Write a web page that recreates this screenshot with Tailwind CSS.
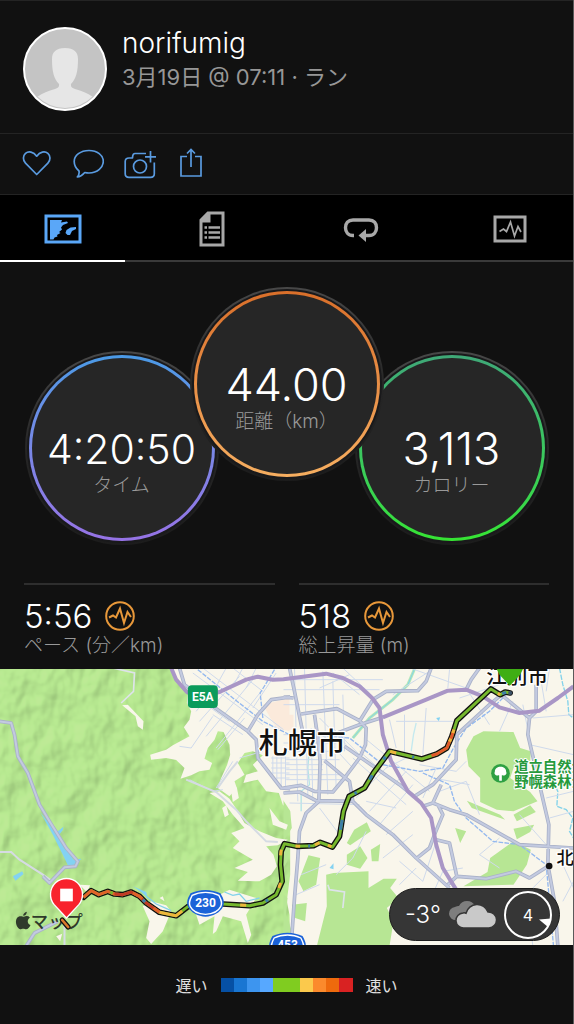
<!DOCTYPE html>
<html lang="ja">
<head>
    <meta charset="UTF-8">
    <meta name="viewport" content="width=device-width, initial-scale=1.0">
    <title>norifumig - ラン</title>
    <script src="https://cdn.jsdelivr.net/npm/@tailwindcss/browser@4"></script>
</head>
<body class="bg-[#111111] min-h-screen border-r border-[#5a5a5a] font-['Inter','Noto_Sans_CJK_JP',sans-serif] text-white">
    <!-- Profile -->
    <header class="border-t border-[#242424] flex items-start gap-[15px] px-[23px] pt-[26px] pb-[22px]">
        <svg class="size-[84px] shrink-0" viewBox="0 0 84 84" role="img" aria-label="norifumig">
            <clipPath id="avatarClip"><circle cx="42" cy="42" r="39"/></clipPath>
            <circle cx="42" cy="42" r="41" fill="#c4c4c4"/>
            <g clip-path="url(#avatarClip)" fill="#e6e6e6">
                <path d="M42 21c-9 0-13 4-13 11 0 13 2 20 7 25 .5 3-1 4-4 5-7 2-12 4-18 8v14h56V70c-6-4-11-6-18-8-3-1-4.500-2-4-5 5-5 7-12 7-25 0-7-4-11-13-11z"/>
            </g>
            <circle cx="42" cy="42" r="41" fill="none" stroke="#ffffff" stroke-width="2"/>
        </svg>
        <div>
            <h1 class="text-[28px] leading-8 font-light">norifumig</h1>
            <p class="text-[22px] leading-8 mt-[2px] text-[#979797] font-['Inter','Noto_Sans_CJK_JP',sans-serif]">3月19日 @ 07:11 · ラン</p>
        </div>
    </header>

    <!-- Actions -->
    <div class="border-t border-[#242424] h-[61px] flex items-center gap-5 px-[22px] pb-[2px] text-[#5a9be0]">
        <button type="button" aria-label="いいね">
            <svg width="30" height="32" viewBox="0 0 30 32" fill="none" stroke="currentColor" stroke-width="1.700" stroke-linejoin="round"><path d="M14.700 27.500 3.500 16.200C.6 13.200.9 8.700 3.500 6.400c3-2.600 8-1.800 11.200 2.800 3.200-4.600 8.200-5.400 11.200-2.800 2.600 2.300 2.900 6.800 0 9.800z"/></svg>
        </button>
        <button type="button" aria-label="コメント">
            <svg width="32" height="32" viewBox="0 0 32 32" fill="none" stroke="currentColor" stroke-width="1.700" stroke-linejoin="round"><path d="M17 3.500c8.200 0 14.300 4.600 14.300 10.700S25.500 25.800 17 26c-1.700 0-3-.2-4.200-.5-2 2.300-4.800 4.300-7.500 4.500 1.500-1.700 2.200-3.500 1.700-6C4 21.500 2.200 18.500 2.200 14.500 2.200 8.300 8.500 3.500 17 3.500z"/></svg>
        </button>
        <button type="button" aria-label="写真を追加">
            <svg width="32" height="32" viewBox="0 0 32 32" fill="none" stroke="currentColor" stroke-width="1.700" stroke-linejoin="round"><path d="M22 6.500H11c-1.500 0-2 .8-2.300 2.300L8.500 11H5c-2.500 0-3.800 1.200-3.800 3.500v12.300c0 2.400 1.300 3.600 3.800 3.600h21.500c2.500 0 3.800-1.200 3.800-3.600V15.500"/><circle cx="16" cy="19.500" r="6.500"/><path d="M26.500 4v11.500M21 9.800h11"/></svg>
        </button>
        <button type="button" aria-label="共有" class="ml-[3px]">
            <svg width="24" height="32" viewBox="0 0 24 32" fill="none" stroke="currentColor" stroke-width="1.700"><path d="M8 9.500H2v19.500h20V9.500h-6M12 20V2.500M8 6.500l4-4 4 4"/></svg>
        </button>
    </div>

    <!-- Tabs -->
    <nav class="bg-black border-t border-[#242424] flex justify-between h-[68px] shadow-[inset_0_-2px_0_#3a3a3a]">
        <button type="button" aria-label="マップ" class="w-[125px] flex items-center justify-center border-b-2 border-white pt-[2px] text-[#5aa7f8]">
            <svg width="38" height="30" viewBox="0 0 38 30"><path d="M2 2h34v26H2z" fill="none" stroke="currentColor" stroke-width="3"/><path d="M6 6h12l-1 2.500 6-1 1 1.500-5 2-2 2.500 1 2-3 2.500 1.500 1-3.500 2 .5 1.500-3 1-1 2H6zM32 13v2l-4 2-2 4h-2.500l-2-2 1-3 4-2.500z" fill="currentColor"/></svg>
        </button>
        <button type="button" aria-label="詳細" class="w-[125px] flex items-center justify-center text-[#a8a8a8]">
            <svg width="26" height="36" viewBox="0 0 26 36"><path d="M9 2h15v32H2V9z" fill="none" stroke="currentColor" stroke-width="3"/><path d="M1.500 8.500 9 1h2.500v10.500h-10z" fill="currentColor"/><path d="M5.500 16.500H8m1.500 0h11.500M5.500 21.500H8m1.500 0h11.500M5.500 26.500H8m1.500 0h11.500" stroke="currentColor" stroke-width="2.600"/></svg>
        </button>
        <button type="button" aria-label="ラップ" class="w-[125px] flex items-center justify-center pt-[2px] text-[#a8a8a8]">
            <svg width="36" height="26" viewBox="0 0 36 26"><path d="M11 18.500h-1C5 18.500 2.500 15 2.500 10.700S5 3 10 3h16c5 0 7.500 3.400 7.500 7.700S31 18.500 26 18.500h-5" fill="none" stroke="currentColor" stroke-width="3.400"/><path d="M23 12v13l-7.500-6.500z" fill="currentColor"/></svg>
        </button>
        <button type="button" aria-label="グラフ" class="w-[125px] flex items-center justify-center text-[#a8a8a8]">
            <svg width="34" height="28" viewBox="0 0 34 28"><path d="M2 2h30v24H2z" fill="none" stroke="currentColor" stroke-width="3"/><path d="m6.500 16.500 4-2.500 3 2.500 4-9.500 4 14 3.500-9.500L28 17" fill="none" stroke="currentColor" stroke-width="1.700"/></svg>
        </button>
    </nav>

    <main>
        <!-- Circle gauges -->
        <section class="flex justify-center -space-x-[29px] pt-[25px]">
            <div class="mt-16 size-[194px] shrink-0 rounded-full bg-linear-to-b from-[#484848] via-[#262626] to-[#1c1c1c] p-[2px]">
                <div class="size-full rounded-full bg-[#19191b] p-[2px]">
                    <div class="size-full rounded-full bg-linear-to-b from-[#4a9ae6] to-[#9673e6] p-[3px]">
                        <div class="size-full rounded-full bg-[#262626] flex flex-col items-center pt-[66px]">
                            <span class="text-[41px] leading-[50px] font-light">4:20:50</span>
                            <span class="text-[19px] leading-6 font-light text-[#999999]">タイム</span>
                        </div>
                    </div>
                </div>
            </div>
            <div class="relative z-10 size-[194px] shrink-0 rounded-full bg-linear-to-b from-[#484848] via-[#262626] to-[#1c1c1c] p-[2px]">
                <div class="size-full rounded-full bg-[#19191b] p-[2px]">
                    <div class="size-full rounded-full bg-linear-to-b from-[#d96f2a] to-[#f6ae60] p-[3px]">
                        <div class="size-full rounded-full bg-[#262626] flex flex-col items-center pt-[66px]">
                            <span class="text-[45px] leading-[50px] font-light">44.00</span>
                            <span class="text-[19px] leading-6 font-light text-[#999999]">距離（km）</span>
                        </div>
                    </div>
                </div>
            </div>
            <div class="mt-16 size-[194px] shrink-0 rounded-full bg-linear-to-b from-[#484848] via-[#262626] to-[#1c1c1c] p-[2px]">
                <div class="size-full rounded-full bg-[#19191b] p-[2px]">
                    <div class="size-full rounded-full bg-linear-to-b from-[#3fa877] to-[#36e432] p-[3px]">
                        <div class="size-full rounded-full bg-[#262626] flex flex-col items-center pt-[66px]">
                            <span class="text-[45px] leading-[50px] font-light">3,113</span>
                            <span class="text-[19px] leading-6 font-light text-[#999999]">カロリー</span>
                        </div>
                    </div>
                </div>
            </div>
        </section>

        <!-- Stats -->
        <section class="grid grid-cols-2 gap-6 px-6 pt-[38px] pb-3">
            <div class="border-t-2 border-[#2e2e2e] pt-3">
                <div class="flex items-center gap-[13px]">
                    <span class="text-[33px] leading-[38px] font-light">5:56</span>
                    <svg width="30" height="30" viewBox="0 0 30 30" fill="none" stroke="#e8983a" stroke-width="2"><circle cx="15" cy="15" r="13.800"/><path d="m4 16.500 4-2 3 2 4-9 4 14.500 3.500-11L26 16"/></svg>
                </div>
                <div class="text-[19px] leading-[22px] font-light text-[#999999]">ペース (分／km)</div>
            </div>
            <div class="border-t-2 border-[#2e2e2e] pt-3">
                <div class="flex items-center gap-[13px]">
                    <span class="text-[33px] leading-[38px] font-light">518</span>
                    <svg width="30" height="30" viewBox="0 0 30 30" fill="none" stroke="#e8983a" stroke-width="2"><circle cx="15" cy="15" r="13.800"/><path d="m4 16.500 4-2 3 2 4-9 4 14.500 3.500-11L26 16"/></svg>
                </div>
                <div class="text-[19px] leading-[22px] font-light text-[#999999]">総上昇量 (m)</div>
            </div>
        </section>

        <!-- Map -->
        <section class="relative">
            <svg class="block w-full h-[276px]" viewBox="0 3 1722 828" preserveAspectRatio="xMidYMid slice" role="img" aria-label="ルートマップ">
                <defs>
                    <filter id="relief" x="0" y="0" width="100%" height="100%" color-interpolation-filters="sRGB">
                        <feTurbulence type="fractalNoise" baseFrequency="0.013 0.010" numOctaves="3" seed="8" result="noise"/>
                        <feDiffuseLighting in="noise" surfaceScale="15" diffuseConstant="1.200" lighting-color="#b7e692" result="light"><feDistantLight azimuth="225" elevation="62"/></feDiffuseLighting>
                        <feComponentTransfer in="light" result="soft"><feFuncR type="linear" slope="0.350" intercept="0.445"/><feFuncG type="linear" slope="0.350" intercept="0.570"/><feFuncB type="linear" slope="0.350" intercept="0.350"/></feComponentTransfer>
                        <feComposite in="soft" in2="SourceGraphic" operator="in"/>
                    </filter>
                    <path id="route" d="M252 688 275 668 298 680 325 670 345 678 370 680 395 672 420 685 440 705 480 733 530 743 565 716 620 708 670 708 750 713 790 705 830 680 848 640 843 590 845 550 855 527 892 535 942 533 962 523 999 537 1020 505 1032 430 1049 385 1095 360 1122 315 1170 250 1267 273 1312 258 1342 240 1357 205 1372 158 1474 63 1502 80 1517 72 1532 75"/>
                    <path id="mainRoads" d="M0 160 35 165 45 200 55 265 85 315 120 410 150 460 200 540 235 580 228 595 195 598 150 645 130 625M80 834 105 795 175 760M540 0 555 50 640 115 745 190 770 215 775 270 845 360 872 362M745 190 775 140 815 95 872 87M870 0 885 70 905 170 912 200M852 87 882 90M905 138 1012 122 1080 158 1100 180 1098 230 1080 270 1035 330 1000 372 945 370 905 352 852 360M945 140 955 210 962 280 958 400 920 435 900 490 895 570 885 690 880 760 875 834M852 375 900 372 950 398 1060 400M1295 0 1280 40 1255 68 1160 70 1120 95 1080 160M1000 200 1080 170 1150 148M975 278 1050 340 1060 400 1100 440 1180 500 1250 570 1350 660M1035 235 1100 280 1200 350 1245 385 1300 350 1370 275 1372 200 1470 110 1500 85M1440 0 1415 35 1400 65M1505 80 1590 150 1585 200 1620 350 1648 470 1645 590 1665 700 1675 834M1590 150 1610 130V50M1270 415 1300 405 1325 350M1315 410 1330 440 1305 500 1290 540 1250 572M1300 405 1350 425 1400 440 1560 530 1722 540M1310 515 1350 525 1372 625 1460 632 1550 610 1590 630 1645 595M1345 650 1372 625"/>
                </defs>
                <rect width="1722" height="834" fill="#f9f6eb"/>
                <path d="M790 110 870 90 870 190 830 180zM852 140h30v45h-30z" fill="#fbeadb"/>

                <!-- forest -->
                <path filter="url(#relief)" fill="#b2e38b" d="M0 0H515L535 40 565 75 562 105 575 130 570 155 553 178 570 205 520 232 500 245 452 260 455 275 500 270 530 276 555 300 543 332 575 322 600 310 630 305 638 285 615 272 625 240 645 215 655 190 672 192 690 230 692 260 683 290 665 330 655 360 690 385 712 360 705 340 735 320 715 285 735 255 760 250 790 262 760 290 775 310 740 320 732 345 775 335 800 370 838 375 850 410 872 430 872 520 872 620 862 700 870 740 872 834H0z"/>
                <g transform="translate(852 0)" fill="#b7e694">
                    <path d="M0 385 20 430 25 480 0 520 18 540 12 580 0 600zM0 680 12 690 8 740 25 790 0 834zM45 640 75 562 110 570 98 650 60 670zM25 710 70 705 65 760 35 750zM150 615 255 610 255 660 300 632 340 632 320 660 345 690 310 720 330 760 318 834H100L130 715 128 620zM190 525 212 485 250 463 262 490 200 532zM190 560 230 535 252 570 230 602 190 590zM265 580 262 545 290 528 285 580zM548 245 570 205 600 190 690 192 710 240 742 250 740 280 690 300 680 330 740 372 762 400 690 430 640 425 590 402 590 330 555 295zM620 570 690 520 742 545 730 590 690 650 540 655 612 612zM690 440 740 412 757 432 700 460zM690 482 752 470 740 492 700 514zM515 480 548 490 530 525zM550 398 650 440 665 455 565 420z"/>
                </g>

                <!-- valleys -->
                <path fill="#f9f6eb" d="M368 112 385 110 432 160 430 185 415 175 408 145zM630 375 660 370 690 392 712 425 735 465 780 490 830 510 865 515 835 532 800 535 822 560 832 595 815 620 780 640 715 638 745 612 705 600 760 575 700 540 720 520 695 495 735 480 700 440 670 400zM695 370 712 358 718 390 700 402zM668 420 680 412 688 440 676 448zM810 420 840 460 865 470 860 485 820 470zM845 350 870 360V425L850 395zM440 810 450 760 430 715 455 700 500 712 515 730 490 790 455 828zM590 740 640 690 690 665 770 690 740 740 755 800 745 825 725 760 670 745 650 790 640 798 645 745 600 770zM240 650 272 652 262 672zM170 805 188 797 182 820zM480 690 490 685 495 700z"/>

                <!-- water -->
                <g fill="#83d2f2">
                    <path d="M122 432 140 455 175 490 192 476 190 486 178 502 200 540 222 575 246 572 228 590 205 592 190 560 160 500zM40 625 68 610 72 618 48 638zM400 655 440 672 445 690 425 672z"/>
                    <path d="M990 600 1002 586 1002 604zM1310 150 1322 148 1318 160z"/>
                </g>
                <g fill="none" stroke="#83d2ea" stroke-width="4">
                    <path d="M440 685 470 708 515 728M675 672 700 682 720 678 740 700 780 690" />
                    <path d="M928 260 925 300 930 350 905 370 905 430" stroke="#b4e3e6"/>
                    <path d="M1245 3 1225 50 1180 95 1110 150 1060 210" stroke="#b4e8b8" stroke-width="9"/>
                    <path d="M1245 3 1225 50 1180 95 1110 150 1060 210" stroke-width="3"/>
                    <path d="M1680 0 1690 50 1705 100 1708 140 1722 150M1660 340 1675 370 1672 415 1700 425 1720 450 1710 490 1722 510" stroke-dasharray="16 4"/>
                    <path d="M1235 250 1242 200 1250 165" stroke="#c4e9ef"/>
                </g>

                <!-- street grid -->
                <g fill="none" stroke="#cfdaec" stroke-width="3">
                    <path d="M580 15 790 170M610 0 852 185M700 0 790 70M590 130 660 40M600 160 720 25M620 205 760 35M650 240 785 70M540 235 575 240 640 145M655 245 735 150M680 0 655 45M730 0 700 55M770 0 740 60M830 15 760 120M690 160 620 110M730 200 640 140M720 270 790 250M700 280 650 360M570 335 640 370 670 365"/>
                    <path d="M815 270H870M815 285H870M815 300H870M815 315H870M830 330H870M820 265V320M832 265V345M845 265V360M858 265V360"/>
                    <path d="M852 35H1150M852 65H1140M852 110H1020M852 200H1040M852 225H1010M852 250H1030M860 275H1020M860 290H970M860 305H970M860 320H1020M860 335H1030M870 405 1080 410M885 0 895 400M915 0 925 380M935 180 940 400M970 10 985 380M1000 40 1010 360M1030 80 1035 250M960 150 1040 230M945 175 1060 300M1000 180 1110 290"/>
                    <path d="M1000 15 1080 80M1030 0 1110 75M960 60 1050 20M1180 80 1290 10M1240 3 1400 60M1350 5 1345 60M1170 155 1190 240M1215 140 1215 260M1190 160H1360M1280 120 1270 260M1095 210 1290 370M1080 250 1240 390M1060 270 1220 410M1180 280 1070 390M1220 310 1110 430M1240 350 1140 470M1190 420 1100 400M1240 430 1160 500M1260 290 1370 310M1300 330 1410 350M1320 370 1400 340 1440 440M1310 300 1270 390M1160 300 1240 260M1380 90 1530 40M1400 280 1370 310"/>
                    <path d="M1400 60 1470 170M1540 100 1500 190M1570 110 1600 260M1620 10 1640 130M1600 150 1722 140M1590 230 1722 260M1650 0 1640 70M1640 390 1722 370M1650 450 1722 430M1560 440 1640 530M1500 510 1440 560 1500 600M1390 600 1330 610 1290 700M1240 500 1150 570M1310 520 1270 640 1200 580M1100 490 1060 570 1010 620M1200 650 1250 600M960 420 1020 500M905 620 980 590M890 680 960 650M1650 610 1580 680 1600 834M1722 640 1690 700M1690 590 1722 660"/>
                </g>
                <path d="M985 650 990 665 1035 672 1030 720M340 0 405 15 402 70 365 105" fill="none" stroke="#dde3ea" stroke-width="5"/>
                <path d="M0 552 35 552 60 575 130 620 158 640M195 760V834M560 335 650 372 710 425 740 460 800 520 835 522M655 360 690 310 715 280" fill="none" stroke="#d5dbe3" stroke-width="6"/>

                <!-- railways -->
                <path d="M595 5 700 90 790 160 870 200 940 200 1050 210 1150 290 1260 310 1330 300 1362 240 1400 180 1470 130 1525 75M825 5 782 75 790 150M1270 315 1350 350 1365 400 1400 450 1480 520 1560 530 1640 590 1650 700 1662 834" fill="none" stroke="#93b8ef" stroke-width="4" stroke-dasharray="14 4"/>

                <!-- main roads, expressways -->
                <g fill="none" stroke-linejoin="round">
                    <use href="#mainRoads" stroke="#a9b1c8" stroke-width="11"/>
                    <use href="#mainRoads" stroke="#c3cae0" stroke-width="6"/>
                    <path stroke="#a996c6" stroke-width="12" d="M515 0 530 35 562 72 600 85 660 72 740 35 775 26 820 35 852 34 980 17 1030 30 1080 55 1118 90 1140 120 1150 200 1175 280 1225 370 1265 405 1295 450 1310 530 1330 600 1370 665M1150 148 1280 95 1345 68 1400 65 1450 85 1500 118 1560 135 1620 128 1675 90 1722 55"/>
                </g>

                <!-- place names -->
                <g font-family="Noto Sans CJK JP, sans-serif" font-weight="500" fill="#111111" stroke="#ffffff" stroke-width="8" paint-order="stroke" stroke-linejoin="round">
                    <text x="778" y="258" font-size="87">札幌市</text>
                    <text x="1460" y="48" font-size="62">江別市</text>
                    <text x="1671" y="588" font-size="52">北</text>
                </g>
                <circle cx="1649" cy="594" r="10" fill="#111111"/>
                <g font-family="Noto Sans CJK JP, sans-serif" font-weight="700" font-size="43" fill="#279a3c" stroke="#ffffff" stroke-width="6" paint-order="stroke" stroke-linejoin="round">
                    <text x="1544" y="312">道立自然公</text>
                    <text x="1544" y="356">野幌森林公</text>
                </g>
                <circle cx="1503" cy="316" r="28" fill="#2ea043"/>
                <path d="M1499 338V322c-12 2-16-5-13-11 0-10 8-15 17-15s17 5 17 15c3 6-1 13-13 11v16z" fill="#ffffff"/>

                <!-- route -->
                <g fill="none" stroke-linejoin="round">
                    <use href="#route" stroke="#111111" stroke-width="17" stroke-linecap="round"/>
                    <use href="#route" stroke="#76b82e" stroke-width="9"/>
                    <g stroke-width="9">
                        <path d="M252 688 275 668 298 680 325 670 345 678 370 680" stroke="#e0632a"/>
                        <path d="M345 678 370 680 395 672 420 685 440 705 480 733" stroke="#c23a26"/>
                        <path d="M400 675 420 685 428 692M462 720 480 733" stroke="#e0632a"/>
                        <path d="M332 672 340 676" stroke="#76b82e"/>
                        <path d="M480 733 530 743 548 729M722 711 740 712M838 660 843 645M843 562 845 545M888 534 902 535M946 531 960 524M985 532 996 536M1172 250 1190 255M1495 76 1502 80" stroke="#edb63c"/>
                        <path d="M430 695 437 702M798 700 806 695M926 534 932 534M1023 485 1028 455M1110 335 1118 322M1152 275 1158 266M1238 266 1244 268M1065 377 1072 373M1508 77 1520 73" stroke="#3d7fa8"/>
                        <path d="M1296 263 1312 258 1342 240 1357 205 1363 185" stroke="#e2582a"/>
                        <path d="M1350 221 1354 212M1360 195 1363 185" stroke="#edb63c"/>
                    </g>
                    <circle cx="1532" cy="75" r="6" fill="#3c5368"/>
                </g>

                <!-- road shields -->
                <g font-family="Roboto, sans-serif" font-weight="700" fill="#ffffff" text-anchor="middle">
                    <rect x="565" y="52" width="90" height="68" rx="12" fill="#0b9b5b"/>
                    <text x="610" y="99" font-size="36">E5A</text>
                    <g id="shield">
                        <path d="M618 666c16 0 32 4 45 10 10 18 13 28 7 41-8 17-30 28-52 29-22-1-44-12-52-29-6-13-3-23 7-41 13-6 29-10 45-10z" fill="#1b62d8"/>
                        <path d="M618 673c14 0 28 3 40 9 8 15 11 23 6 33-7 14-26 23-46 24-20-1-39-10-46-24-5-10-2-18 6-33 12-6 26-9 40-9z" fill="none" stroke="#ffffff" stroke-width="4"/>
                    </g>
                    <text x="618" y="716" font-size="36">230</text>
                    <use href="#shield" x="246" y="128"/>
                    <text x="864" y="844" font-size="36">453</text>
                </g>

                <!-- attribution -->
                <g fill="#2f3a2b">
                    <path d="M73 746c4 0 7-3 12-1 3 0 4 2 6 4-9 6-8 18 2 22-3 7-8 13-13 13-4 0-5-2-9-2s-6 2-9 2c-9-2-17-22-10-33 4-6 10-7 14-6 3 1 5 2 7 1zM71 743c0-6 5-11 11-12 0 7-5 12-11 12z"/>
                    <text x="94" y="780" font-family="Noto Sans CJK JP, sans-serif" font-size="52" font-weight="500">マップ</text>
                </g>

                <!-- finish / start pins -->
                <path d="M201 750 164 710A48 48 0 1 1 238 710z" fill="#f8232d" stroke="#ffffff" stroke-width="4"/>
                <rect x="182" y="662" width="38" height="38" fill="#ffffff"/>
                <path d="M1531 53 1500 20 1490 0H1572L1562 20z" fill="#3fae14"/>
                <path d="M188 756 206 777" stroke="#111111" stroke-width="15" stroke-linecap="round"/>
                <path d="M188 756 206 777" stroke="#d9792c" stroke-width="8" stroke-linecap="round"/>
            </svg>

            <!-- Weather -->
            <div class="absolute right-[13px] bottom-1 w-[171px] h-[53px] rounded-full bg-[#363636] border border-[#1c1c1c] flex items-center justify-between pl-[15px] pr-[7px]">
                <span class="text-2xl font-light">-3°</span>
                <svg width="48" height="30" viewBox="0 0 48 30"><path d="M8 20a6.500 6.500 0 0 1-1-13c1.500-1 3-1 4-1A9 9 0 0 1 27 6a6 6 0 0 1 1 12z" fill="#7e7e7e"/><path d="M16 28a7.500 7.500 0 0 1-1-15c1-.2 2-.2 3 .2A11.500 11.500 0 0 1 40 12a8 8 0 0 1 1 16z" fill="#c9c9c9" stroke="#363636" stroke-width="1.500"/></svg>
                <div class="relative size-12">
                    <svg class="absolute inset-0" width="48" height="48" viewBox="0 0 48 48"><circle cx="24" cy="24" r="23" fill="none" stroke="#ffffff" stroke-width="2"/><path d="M35 28.500 47 27.500 44 36z" fill="#ffffff"/></svg>
                    <span class="absolute inset-0 flex items-center justify-center text-base">4</span>
                </div>
            </div>
        </section>
    </main>

    <!-- Pace legend -->
    <footer class="h-[79px] flex items-center justify-center gap-[13px] text-base font-['Noto_Sans_CJK_JP',sans-serif] text-[#e0e0e0]">
        <span>遅い</span>
        <div class="flex w-[132px] h-[14px]">
            <span class="flex-1 bg-[#0650a4]"></span>
            <span class="flex-1 bg-[#1976d2]"></span>
            <span class="flex-1 bg-[#3d95ef]"></span>
            <span class="flex-1 bg-[#57a8ff]"></span>
            <span class="flex-2 bg-[#80cc20]"></span>
            <span class="flex-1 bg-[#fbc94c]"></span>
            <span class="flex-1 bg-[#fb8a2c]"></span>
            <span class="flex-1 bg-[#ee6a0d]"></span>
            <span class="flex-1 bg-[#d92222]"></span>
        </div>
        <span>速い</span>
    </footer>
</body>
</html>
